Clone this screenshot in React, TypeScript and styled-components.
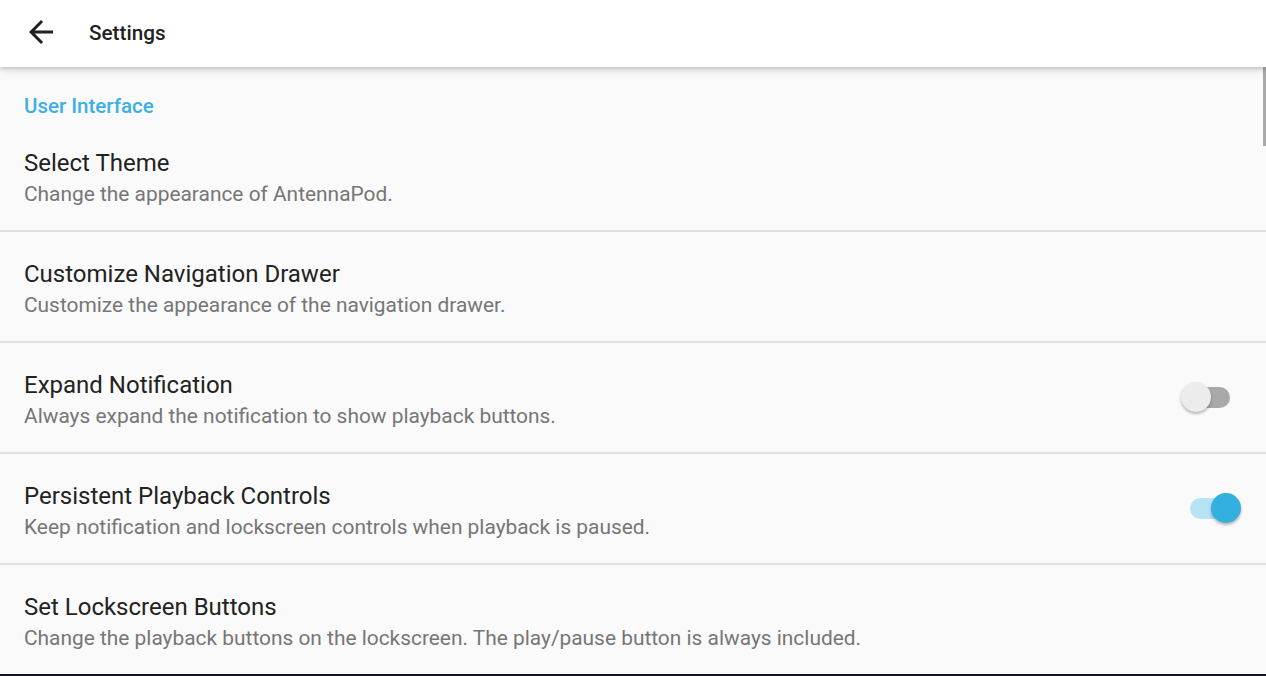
import React from "react";
import styled, { createGlobalStyle } from "styled-components";

const Global = createGlobalStyle`
  html, body { margin: 0; padding: 0; }
  body { font-family: Roboto, "Noto Sans", sans-serif; background: #fafafa; }
  * { box-sizing: border-box; }
`;

const Screen = styled.div`
  width: 1266px;
  height: 676px;
  overflow: hidden;
  position: relative;
  background: #fafafa;
  display: flex;
  flex-direction: column;
  border-bottom: 2px solid #12122a;
`;

const Toolbar = styled.header`
  height: 67px;
  flex: none;
  background: #ffffff;
  display: flex;
  align-items: center;
  padding-left: 23px;
  position: relative;
  z-index: 2;
  box-shadow: 0 2px 4px rgba(0, 0, 0, 0.18), 0 4px 12px rgba(0, 0, 0, 0.08);
`;

const BackButton = styled.button`
  border: 0;
  background: none;
  padding: 0;
  width: 36px;
  height: 36px;
  display: flex;
  align-items: center;
  justify-content: center;
  margin-top: -3px;
  color: #212121;
`;

const ToolbarTitle = styled.h1`
  margin: -2px 0 0 30px;
  font-size: 20.7px;
  font-weight: 500;
  color: #212121;
`;

const Content = styled.div`
  flex: 1;
  position: relative;
  display: flex;
  flex-direction: column;
`;

const Scrollbar = styled.div`
  position: absolute;
  right: 0;
  top: 0;
  width: 3px;
  height: 79px;
  background: #a9a9a9;
`;

const SectionHeader = styled.div`
  height: 54px;
  flex: none;
  padding: 27px 24px 0;
  font-size: 20.5px;
  font-weight: 500;
  color: #3cb0e3;
  line-height: 24px;
`;

const Row = styled.div<{ $last?: boolean }>`
  height: 111px;
  flex: none;
  display: flex;
  align-items: flex-start;
  padding: 28px 24px 0;
  border-bottom: ${(p) => (p.$last ? "none" : "2px solid #e1e1e1")};
`;

const Texts = styled.div`
  flex: 1;
  display: flex;
  flex-direction: column;
`;

const Title = styled.div`
  font-size: 24px;
  color: #222222;
  line-height: 28px;
`;

const Summary = styled.div`
  font-size: 20.9px;
  color: #767676;
  line-height: 26px;
  margin-top: 4px;
`;

const SwitchWrap = styled.div`
  position: relative;
  width: 60px;
  height: 32px;
  flex: none;
  margin-top: 11px;
  margin-right: 1px;
`;

const Track = styled.div<{ $on: boolean }>`
  position: absolute;
  left: 9px;
  width: 40px;
  top: 5px;
  height: 21px;
  border-radius: 11px;
  background: ${(p) => (p.$on ? "#b8e3f5" : "#a9a9a9")};
`;

const Thumb = styled.div<{ $on: boolean }>`
  position: absolute;
  top: 0px;
  left: ${(p) => (p.$on ? "30px" : "0px")};
  width: 30px;
  height: 30px;
  border-radius: 50%;
  background: ${(p) => (p.$on ? "#33afe0" : "#ececec")};
  box-shadow: 0 2px 3px rgba(0, 0, 0, 0.28);
`;

const Switch = ({ on }: { on: boolean }) => (
  <SwitchWrap>
    <Track $on={on} />
    <Thumb $on={on} />
  </SwitchWrap>
);

type Item = { title: string; summary: string; toggle?: boolean; on?: boolean };

const items: Item[] = [
  { title: "Select Theme", summary: "Change the appearance of AntennaPod." },
  { title: "Customize Navigation Drawer", summary: "Customize the appearance of the navigation drawer." },
  {
    title: "Expand Notification",
    summary: "Always expand the notification to show playback buttons.",
    toggle: true,
    on: false,
  },
  {
    title: "Persistent Playback Controls",
    summary: "Keep notification and lockscreen controls when playback is paused.",
    toggle: true,
    on: true,
  },
  {
    title: "Set Lockscreen Buttons",
    summary: "Change the playback buttons on the lockscreen. The play/pause button is always included.",
  },
];

export default function App() {
  return (
    <Screen>
      <Global />
      <Toolbar>
        <BackButton aria-label="Back">
          <svg width="36" height="36" viewBox="0 0 24 24" fill="currentColor">
            <path d="M20 11H7.83l5.59-5.59L12 4l-8 8 8 8 1.41-1.41L7.83 13H20v-2z" />
          </svg>
        </BackButton>
        <ToolbarTitle>Settings</ToolbarTitle>
      </Toolbar>
      <Content>
        <Scrollbar />
        <SectionHeader>User Interface</SectionHeader>
        {items.map((it, i) => (
          <Row key={it.title} $last={i === items.length - 1}>
            <Texts>
              <Title>{it.title}</Title>
              <Summary>{it.summary}</Summary>
            </Texts>
            {it.toggle && <Switch on={!!it.on} />}
          </Row>
        ))}
      </Content>
    </Screen>
  );
}
